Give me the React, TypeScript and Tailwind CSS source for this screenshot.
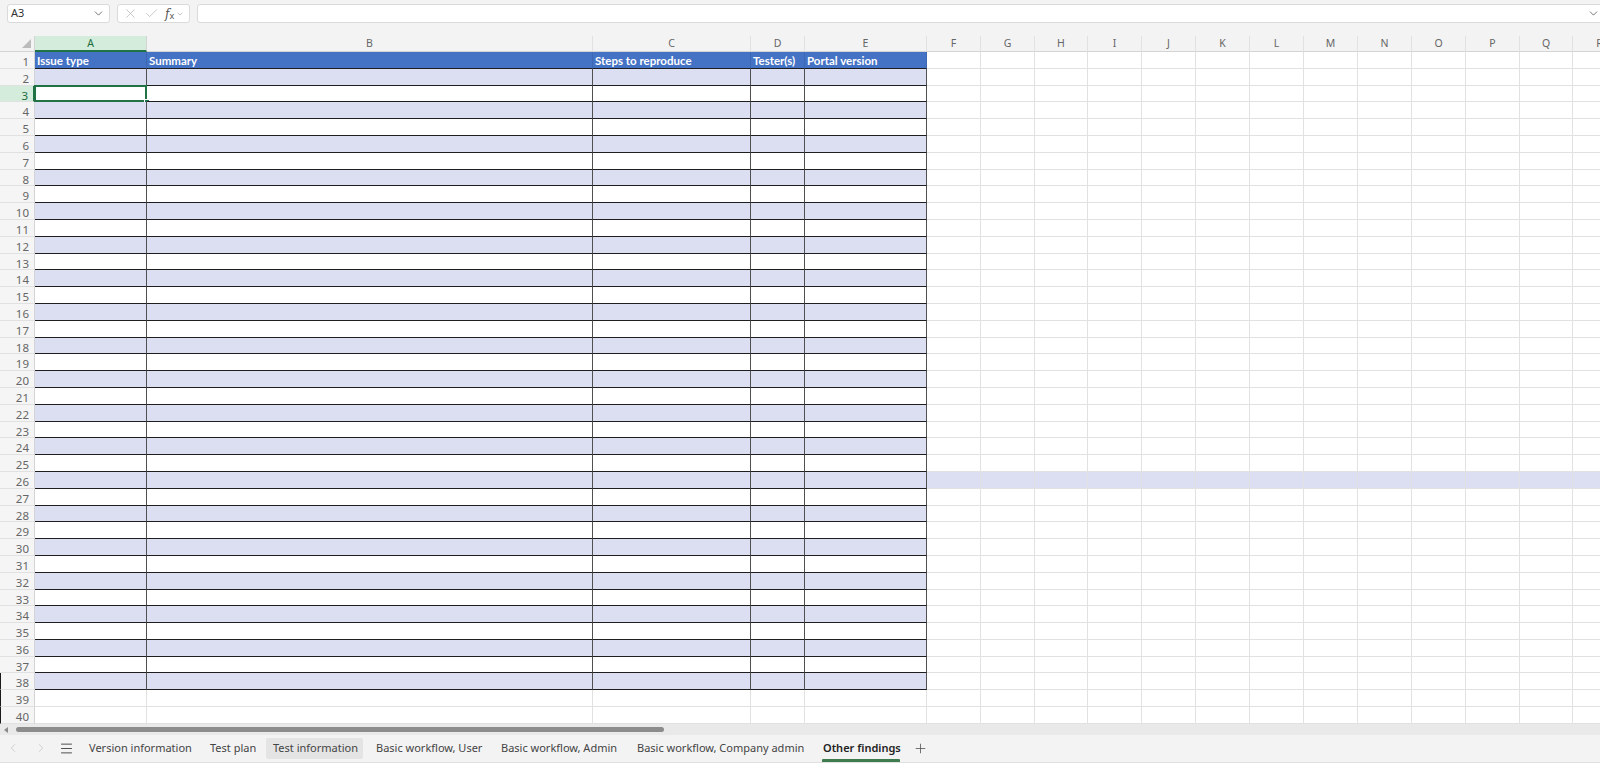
import { X, Check, ChevronDown, ChevronLeft, ChevronRight, Menu, Plus } from "lucide-react";

type Col = { key: string; w: string; title?: string };

const COLS: Col[] = [
  { key: "A", w: "w-[112px]", title: "Issue type" },
  { key: "B", w: "w-[446px]", title: "Summary" },
  { key: "C", w: "w-[158px]", title: "Steps to reproduce" },
  { key: "D", w: "w-[54px]", title: "Tester(s)" },
  { key: "E", w: "w-[122px]", title: "Portal version" },
  { key: "F", w: "w-[54px]" },
  { key: "G", w: "w-[54px]" },
  { key: "H", w: "w-[53px]" },
  { key: "I", w: "w-[54px]" },
  { key: "J", w: "w-[54px]" },
  { key: "K", w: "w-[54px]" },
  { key: "L", w: "w-[54px]" },
  { key: "M", w: "w-[54px]" },
  { key: "N", w: "w-[54px]" },
  { key: "O", w: "w-[54px]" },
  { key: "P", w: "w-[54px]" },
  { key: "Q", w: "w-[53px]" },
  { key: "R", w: "w-[54px]" },
];

const TABLE_COLS = 5;
const TABLE_ROWS = 38;
const ROWS = Array.from({ length: 40 }, (_, i) => i + 1);

const TABS = [
  { label: "Version information", w: "w-[116px] mr-[5px]" },
  { label: "Test plan", w: "w-[59px] mr-[4px]" },
  { label: "Test information", w: "w-[97px] mr-[6px]", hover: true },
  { label: "Basic workflow, User", w: "w-[119px] mr-[6px]" },
  { label: "Basic workflow, Admin", w: "w-[129px] mr-[7px]" },
  { label: "Basic workflow, Company admin", w: "w-[181px] mr-[5px]" },
  { label: "Other findings", w: "w-[91px]", active: true },
];

const uiFont = "font-['Noto_Sans',sans-serif]";

function FormulaBar() {
  return (
    <div className="flex h-[36px] shrink-0 items-start gap-[7px] bg-[#f3f3f3] pl-[7px] pt-[4px]">
      <div className="flex h-[19px] w-[103px] shrink-0 items-center justify-between rounded-[3px] border border-[#dadada] bg-white pl-[3px] pr-[4px]">
        <span className="text-[11px] text-[#333]">A3</span>
        <ChevronDown size={13} strokeWidth={1.5} className="text-[#555]" />
      </div>
      <div className="flex h-[19px] w-[73px] shrink-0 items-center gap-[6px] rounded-[3px] border border-[#dadada] bg-white pl-[5px]">
        <X size={15} strokeWidth={1.1} className="text-[#b0b0b0]" />
        <Check size={15} strokeWidth={1.1} className="text-[#b0b0b0]" />
        <span className="flex items-center text-[#555]">
          <span className="font-['DejaVu_Serif',serif] text-[12px] italic leading-none">f</span>
          <span className="mt-[4px] text-[9px] leading-none">x</span>
          <ChevronDown size={8} strokeWidth={1.5} className="ml-[2px] text-[#888]" />
        </span>
      </div>
      <div className="flex h-[19px] w-[1412px] shrink-0 items-center justify-end rounded-[3px] border border-[#dadada] bg-white pr-[8px]">
        <ChevronDown size={13} strokeWidth={1.5} className="text-[#555]" />
      </div>
    </div>
  );
}

function ColumnHeaders() {
  return (
    <div className="flex h-[16px] shrink-0 bg-[#f3f3f3]">
      <div className="relative w-[35px] shrink-0 border-r border-b border-[#d4d4d4]">
        <div className="absolute right-[3px] bottom-[3px] h-0 w-0 border-b-[9px] border-l-[9px] border-b-[#bcbcbc] border-l-transparent" />
      </div>
      {COLS.map((c) => {
        const sel = c.key === "A";
        return (
          <div
            key={c.key}
            className={`${c.w} shrink-0 border-r text-center text-[10.5px] leading-[14px] ${
              sel
                ? "border-b-2 border-r-[#d4d4d4] border-b-[#217346] bg-[#d3ecdb] text-[#1e6b3c]"
                : "border-b border-r-[#e1e1e1] border-b-[#d4d4d4] text-[#666]"
            }`}
          >
            {c.key}
          </div>
        );
      })}
    </div>
  );
}

function Cell({ col, idx, n }: { col: Col; idx: number; n: number }) {
  const inTable = idx < TABLE_COLS && n <= TABLE_ROWS;
  const header = inTable && n === 1;
  const banded = n % 2 === 0 && (inTable || n === 26);
  const selected = idx === 0 && n === 3;

  let cls = "border-r-[#e1e1e1] border-b-[#e1e1e1]";
  if (inTable) cls = "border-r-[#505050] border-b-[#1e1e1e]";
  if (header) cls = "border-r-[#3d66b3] border-b-[#1e1e1e] bg-[#4472c4]";
  else if (banded) cls += " bg-[#dbdff1]";

  return (
    <div className={`${col.w} relative shrink-0 border-r border-b ${cls}`}>
      {header && (
        <span className="block truncate pl-[2px] pt-[2px] font-['Lato',sans-serif] text-[11.5px] font-bold leading-[14px] text-white">
          {col.title}
        </span>
      )}
      {selected && (
        <>
          <div className="absolute -top-[1px] -left-[1px] -right-[1px] -bottom-[1px] border-2 border-[#217346]" />
          <div className="absolute -right-[4px] -bottom-[4px] h-[6px] w-[6px] border border-white bg-[#217346]" />
        </>
      )}
    </div>
  );
}

function SheetRow({ n }: { n: number }) {
  const sel = n === 3;
  const edge = n >= 38 ? "border-l border-l-[#1a1a1a]" : "";
  return (
    <div className="flex h-[16.8px] shrink-0">
      <div
        className={`w-[35px] shrink-0 border-b pr-[5px] pt-[2px] text-right text-[11.5px] leading-[15px] ${edge} ${
          sel
            ? "border-r-2 border-b-[#e1e1e1] border-r-[#217346] bg-[#d3ecdb] text-[#1e6b3c]"
            : "border-r border-b-[#e1e1e1] border-r-[#d4d4d4] bg-[#f5f5f5] text-[#666]"
        }`}
      >
        {n}
      </div>
      {COLS.map((c, i) => (
        <Cell key={c.key} col={c} idx={i} n={n} />
      ))}
    </div>
  );
}

function ScrollStrip() {
  return (
    <div className="flex h-[11px] shrink-0 items-center bg-[#e9e9e9] pl-[4px] pt-[1px]">
      <div className="h-0 w-0 border-y-[3px] border-r-[4px] border-y-transparent border-r-[#8a8a8a]" />
      <div className="ml-[8px] h-[5px] w-[648px] rounded-full bg-[#8c8c8c]" />
    </div>
  );
}

function SheetTabs() {
  return (
    <div className="flex h-[28px] shrink-0 items-center border-b border-[#e0e0e0] bg-[#f3f3f3] text-[11px] text-[#444]">
      <ChevronLeft size={14} strokeWidth={1.3} className="ml-[6px] text-[#c4c4c4]" />
      <ChevronRight size={14} strokeWidth={1.3} className="ml-[14px] text-[#c4c4c4]" />
      <Menu size={15} strokeWidth={1.5} className="ml-[11px] text-[#444]" />
      <div className="ml-[8px] flex h-full items-center">
        {TABS.map((t) => (
          <div
            key={t.label}
            className={`${t.w} relative flex h-[21px] shrink-0 items-center whitespace-nowrap px-[7px] ${
              t.hover ? "rounded-[2px] bg-[#e4e4e4]" : ""
            } ${t.active ? "font-semibold text-[#222]" : ""}`}
          >
            {t.label}
            {t.active && (
              <div className="absolute right-[7px] -bottom-[3px] left-[6px] h-[3px] rounded-t-[1px] bg-[#3e7b4f]" />
            )}
          </div>
        ))}
        <Plus size={15} strokeWidth={1.3} className="ml-[6px] text-[#555]" />
      </div>
    </div>
  );
}

export default function App() {
  return (
    <div className={`flex h-[763px] w-[1600px] flex-col overflow-hidden bg-white ${uiFont}`}>
      <FormulaBar />
      <ColumnHeaders />
      <div className="flex shrink-0 flex-col">
        {ROWS.map((n) => (
          <SheetRow key={n} n={n} />
        ))}
      </div>
      <ScrollStrip />
      <SheetTabs />
    </div>
  );
}
